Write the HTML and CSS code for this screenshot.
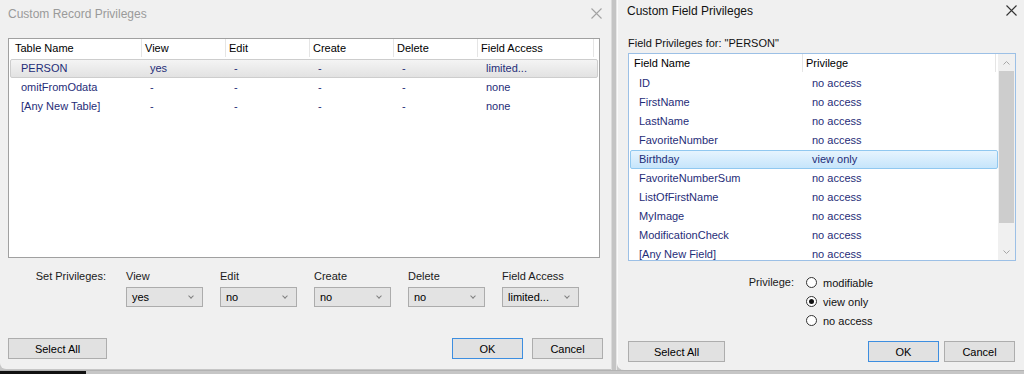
FILE: index.html
```html
<!DOCTYPE html>
<html lang="en">
<head>
<meta charset="UTF-8">
<title>Custom Privileges</title>
<link rel="stylesheet" href="styles.css">
</head>
<body>
<div class="desk">

<section class="dlg dlg-left">
<div class="titlebar inactive">
<span class="title">Custom Record Privileges</span>
<svg class="close" width="11" height="11" viewBox="0 0 11 11"><path d="M0.5 0.5L10.5 10.5M10.5 0.5L0.5 10.5"/></svg>
</div>

<div class="listbox rec-list">
<div class="hd">
<span>Table Name</span><span>View</span><span>Edit</span><span>Create</span><span>Delete</span><span>Field Access</span>
</div>
<div class="row sel-gray"><span>PERSON</span><span>yes</span><span>-</span><span>-</span><span>-</span><span>limited...</span></div>
<div class="row"><span>omitFromOdata</span><span>-</span><span>-</span><span>-</span><span>-</span><span>none</span></div>
<div class="row"><span>[Any New Table]</span><span>-</span><span>-</span><span>-</span><span>-</span><span>none</span></div>
</div>

<div class="setpriv">
<div class="setlabel">Set Privileges:</div>
<div class="field"><span>View</span><div class="combo">yes<i class="chev"></i></div></div>
<div class="field"><span>Edit</span><div class="combo">no<i class="chev"></i></div></div>
<div class="field"><span>Create</span><div class="combo">no<i class="chev"></i></div></div>
<div class="field"><span>Delete</span><div class="combo">no<i class="chev"></i></div></div>
<div class="field"><span>Field Access</span><div class="combo">limited...<i class="chev"></i></div></div>
</div>

<div class="footer">
<button class="btn wide">Select All</button>
<span class="spacer"></span>
<button class="btn default">OK</button>
<button class="btn">Cancel</button>
</div>
</section>

<div class="edge"></div>

<section class="dlg dlg-right">
<div class="titlebar">
<span class="title">Custom Field Privileges</span>
<svg class="close" width="11" height="11" viewBox="0 0 11 11"><path d="M0.5 0.5L10.5 10.5M10.5 0.5L0.5 10.5"/></svg>
</div>

<div class="caption">Field Privileges for: "PERSON"</div>

<div class="listbox fld-list">
<div class="fld-body">
<div class="hd"><span>Field Name</span><span>Privilege</span></div>
<div class="rows">
<div class="row"><span>ID</span><span>no access</span></div>
<div class="row"><span>FirstName</span><span>no access</span></div>
<div class="row"><span>LastName</span><span>no access</span></div>
<div class="row"><span>FavoriteNumber</span><span>no access</span></div>
<div class="row sel-blue"><span>Birthday</span><span>view only</span></div>
<div class="row"><span>FavoriteNumberSum</span><span>no access</span></div>
<div class="row"><span>ListOfFirstName</span><span>no access</span></div>
<div class="row"><span>MyImage</span><span>no access</span></div>
<div class="row"><span>ModificationCheck</span><span>no access</span></div>
<div class="row"><span>[Any New Field]</span><span>no access</span></div>
</div>
</div>
<div class="scrollbar">
<div class="arrow"><svg width="7" height="4" viewBox="0 0 7 4"><path d="M0.5 3.5L3.5 0.5L6.5 3.5"/></svg></div>
<div class="thumb"></div>
<div class="track"></div>
<div class="arrow"><svg width="7" height="4" viewBox="0 0 7 4"><path d="M0.5 0.5L3.5 3.5L6.5 0.5"/></svg></div>
</div>
</div>

<div class="radios">
<div class="radlabel">Privilege:</div>
<div class="options">
<label class="opt"><i class="dot"></i>modifiable</label>
<label class="opt"><i class="dot on"></i>view only</label>
<label class="opt"><i class="dot"></i>no access</label>
</div>
</div>

<div class="footer">
<button class="btn wide2">Select All</button>
<span class="spacer"></span>
<button class="btn default">OK</button>
<button class="btn">Cancel</button>
</div>
</section>

</div>
<div class="floor"><span class="dark"></span></div>
</body>
</html>
```

FILE: styles.css
```css
body {
margin: 0;
width: 1024px;
height: 374px;
overflow: hidden;
background: #c6c6c6;
font-family: "Liberation Sans", Arial, sans-serif;
font-size: 11px;
color: #1a1a1a;
}

.desk {
display: flex;
align-items: flex-start;
height: 370px;
}

.dlg {
box-sizing: border-box;
background: #f0f0f0;
display: flex;
flex-direction: column;
}

.dlg-left {
width: 611px;
height: 369px;
padding: 0 8px;
border-radius: 0 0 0 6px;
}

.dlg-right {
width: 407px;
height: 370px;
padding: 0 9px 0 10px;
border-left: 1px solid #fafafa;
border-radius: 0 0 0 7px;
}

.edge {
width: 4px;
height: 370px;
background: #c4c4c4;
border-left: 1px solid #dadada;
border-right: 1px solid #e6e6e6;
}

/* title bars */
.titlebar {
display: flex;
justify-content: space-between;
align-items: flex-start;
line-height: 14px;
}

.dlg-left .titlebar {
height: 38px;
padding-top: 7px;
box-sizing: border-box;
}

.dlg-right .titlebar {
height: 36px;
padding-top: 4px;
box-sizing: border-box;
}

.titlebar .title {
font-size: 12px;
}

.dlg-left .title {
color: #9a9a9a;
}

.dlg-right .title {
color: #111;
margin-left: -1px;
}

.close {
fill: none;
stroke-width: 1.1;
}

.dlg-left .close {
stroke: #a3a3a3;
margin: 1px 1px 0 0;
}

.dlg-right .close {
stroke: #333;
margin: 1px -2px 0 0;
}

/* list boxes */
.listbox {
box-sizing: border-box;
background: #fff;
border: 1px solid #a0a0a0;
}

.hd {
display: grid;
height: 18px;
line-height: 18px;
color: #000;
}

.hd span {
border-right: 1px solid #e5e5e5;
padding-left: 3px;
white-space: nowrap;
}

.row {
display: grid;
height: 19px;
line-height: 17px;
box-sizing: border-box;
border: 1px solid transparent;
border-radius: 2px;
color: #1f2d78;
white-space: nowrap;
}

.rec-list {
width: 592px;
height: 220px;
}

.rec-list .hd {
grid-template-columns: 133px 84px 84px 84px 84px 116px;
margin-bottom: 2px;
}

.rec-list .hd span:first-child {
padding-left: 6px;
}

.rec-list .row {
margin: 0 1px;
grid-template-columns: 131px 84px 84px 84px 84px 1fr;
}

.rec-list .row span {
padding-left: 8px;
}

.rec-list .row span:first-child {
padding-left: 10px;
}

.sel-gray {
background: linear-gradient(#f4f4f4, #e2e2e2);
border-color: #cdcdcd;
}

.fld-list {
width: 388px;
height: 208px;
border-color: #9cc0e6;
display: flex;
overflow: hidden;
}

.fld-body {
flex: 1;
overflow: hidden;
}

.fld-list .hd {
grid-template-columns: 174px 193px;
margin-bottom: 2px;
}

.fld-list .hd span:first-child {
padding-left: 5px;
}

.fld-list .row {
margin-left: 1px;
grid-template-columns: 172px 1fr;
}

.fld-list .row span {
padding-left: 8px;
}

.fld-list .row span + span {
padding-left: 9px;
}

.sel-blue {
background: linear-gradient(#e6f4fe, #c6e5fb);
border-color: #90c8f0;
}

.scrollbar {
width: 17px;
background: #f0f0f0;
display: flex;
flex-direction: column;
}

.arrow {
height: 17px;
display: flex;
align-items: center;
justify-content: center;
}

.arrow svg {
fill: none;
stroke: #a6a6a6;
}

.thumb {
height: 152px;
margin: 0 1px;
background: #cdcdcd;
}

.track {
flex: 1;
}

/* set privileges row */
.setpriv {
display: grid;
grid-template-columns: 101px repeat(5, 77px);
column-gap: 17px;
margin-top: 11px;
}

.setlabel {
text-align: right;
line-height: 14px;
padding-right: 3px;
}

.field span {
display: block;
line-height: 14px;
}

.combo {
box-sizing: border-box;
margin-top: 4px;
height: 20px;
line-height: 18px;
padding-left: 5px;
background: #e3e3e3;
border: 1px solid #acacac;
color: #000;
display: flex;
justify-content: space-between;
align-items: center;
}

.chev {
width: 3px;
height: 3px;
margin: 0 9px 2px 0;
border-right: 1px solid #808080;
border-bottom: 1px solid #808080;
transform: rotate(45deg);
}

/* caption + radios */
.caption {
line-height: 14px;
margin-bottom: 3px;
color: #111;
}

.radios {
display: grid;
grid-template-columns: 166px auto;
column-gap: 12px;
margin-top: 12px;
}

.radlabel {
text-align: right;
line-height: 19px;
}

.opt {
display: flex;
align-items: center;
height: 19px;
gap: 6px;
color: #111;
}

.dot {
box-sizing: border-box;
width: 11px;
height: 11px;
border: 1px solid #333;
border-radius: 50%;
background: #fff;
position: relative;
}

.dot.on::after {
content: "";
position: absolute;
left: 2px;
top: 2px;
width: 5px;
height: 5px;
border-radius: 50%;
background: #111;
}

/* buttons */
.footer {
display: flex;
gap: 9px;
}

.dlg-left .footer {
margin-top: 31px;
}

.dlg-right .footer {
margin-top: 11px;
gap: 5px;
}

.spacer {
flex: 1;
}

.btn {
box-sizing: border-box;
width: 71px;
height: 21px;
padding: 0;
font: inherit;
color: #000;
background: #e1e1e1;
border: 1px solid #adadad;
}

.btn.wide {
width: 99px;
}

.btn.wide2 {
width: 97px;
}

.btn.default {
border-color: #3d8ee0;
}

.floor {
height: 4px;
border-top: 1px solid #b3b3b3;
box-sizing: border-box;
}

.floor .dark {
display: block;
width: 86px;
height: 100%;
background: #111;
}
```
